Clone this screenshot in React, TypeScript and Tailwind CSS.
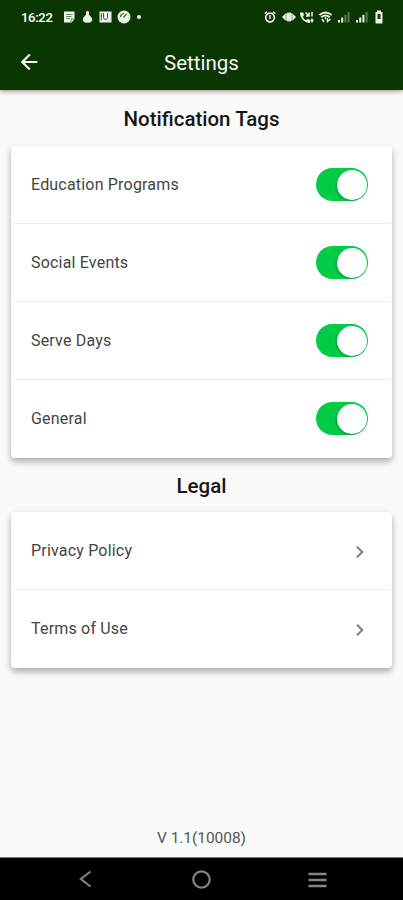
import { useState } from "react";
import type { ReactNode } from "react";

const TAGS = ["Education Programs", "Social Events", "Serve Days", "General"];
const LEGAL = ["Privacy Policy", "Terms of Use"];

function StatusBar() {
  return (
    <div className="flex h-[34px] items-center justify-between pl-[21px] pr-[19px] text-[#edf5ea]">
      <div className="flex items-center">
        <span className="w-[42px] text-[13px] font-semibold leading-none tracking-[-0.35px]">16:22</span>
        <svg className="h-[12px] w-[12px]" viewBox="0 0 12 12" fill="none">
          <path d="M1 0.500h10.500v7.500l-3 3.500H1z" fill="currentColor" />
          <path d="M3 3.500h6.500M3 5.500h5.500M3 7.500h4M8 11V8h3" stroke="#477039" strokeWidth="0.8" />
        </svg>
        <svg className="ml-[7px] h-[12px] w-[11px]" viewBox="0 0 11 12" fill="currentColor">
          <path d="M4 0.500Q5.500-0.300 7 0.500v3.300l2.500 2.700Q11 8.500 9.500 10.500 8.500 11.800 5.500 11.800T1.500 10.500Q0 8.500 1.500 6.500L4 3.800z" />
        </svg>
        <svg className="ml-[6px] h-[12px] w-[13px]" viewBox="0 0 13 12" fill="none">
          <path d="M0.500 0.500h12v11H0.500z" fill="currentColor" />
          <path d="M4.500 2v4.500q0 2 2 2t2-2V2M2.300 2v7.500" stroke="#38642b" strokeWidth="1" />
        </svg>
        <svg className="ml-[5px] h-[14px] w-[14px]" viewBox="0 0 14 14" fill="none">
          <circle cx="7" cy="7" r="6.500" fill="currentColor" />
          <path d="M6.500 7.500l3-3.500M3.500 7A3.500 3.500 0 0 1 7 3.500" stroke="#38642b" strokeWidth="1.200" />
        </svg>
        <span className="ml-[6px] mt-[-1px] h-[4px] w-[4px] rounded-full bg-[#edf5ea]" />
      </div>
      <div className="flex items-center">
        <svg className="h-[12px] w-[12px]" viewBox="0 0 12 12" fill="none" stroke="currentColor">
          <circle cx="6" cy="6.500" r="4.300" strokeWidth="1.700" />
          <path d="M6 4v4M0.700 2.500L3 0.800M11.300 2.500L9 0.800" strokeWidth="1.500" />
        </svg>
        <svg className="ml-[6px] h-[12px] w-[14px]" viewBox="0 0 14 12" fill="currentColor">
          <path d="M0 6l3-3v6zM14 6l-3-3v6z" />
          <rect x="3" y="2.500" width="8" height="7" opacity="0.75" />
          <rect x="4.800" y="1.500" width="4.400" height="9" rx="1" opacity="0.85" />
        </svg>
        <svg className="ml-[3px] h-[13px] w-[15px]" viewBox="0 0 15 13" fill="none" stroke="currentColor">
          <path d="M1 1.500c0 5.500 4 10 10 10.500V8.700L8.500 8 7 9.300Q4.500 8 3.700 5.500L5 4.200 4.300 1.500z" fill="currentColor" stroke="none" />
          <path d="M6.500 1.500l3.500 3.300M10 1.500v3.500H7M13 1v4.500M13 7.500v4M11.500 9.500h3" strokeWidth="1.500" />
        </svg>
        <svg className="ml-[5px] h-[12px] w-[13px]" viewBox="0 0 13 12" fill="none" stroke="currentColor">
          <path d="M0.500 4Q6.500-0.800 12.500 4M2.300 6.300q4.200-3.500 8.400 0" strokeWidth="1.900" />
          <path d="M6.500 6v2.500M3 8l2 3M8.500 7v3.500l3-2.500" strokeWidth="1.400" />
        </svg>
        <Signal level={2} />
        <Signal level={3} />
        <svg className="ml-[6px] h-[14px] w-[10px]" viewBox="0 0 10 14" fill="none">
          <path d="M3 0.500h4V2h1.500v11.500h-7V2H3z" fill="currentColor" />
          <path d="M3.500 4h3v5h-3z" fill="#174010" />
        </svg>
      </div>
    </div>
  );
}

function Signal({ level }: { level: number }) {
  return (
    <svg className="ml-[6px] h-[12px] w-[12px]" viewBox="0 0 12 12" fill="currentColor">
      <rect x="0" y="9" width="2" height="2.500" />
      <rect x="3.200" y="6.500" width="2" height="5" />
      <rect x="6.400" y="3.800" width="2" height="7.700" opacity={level > 2 ? 1 : 0.35} />
      <rect x="9.600" y="1" width="2" height="10.500" opacity="0.35" />
    </svg>
  );
}

function Toggle() {
  const [on, setOn] = useState(true);
  return (
    <button
      role="switch"
      aria-checked={on}
      onClick={() => setOn(!on)}
      className={`flex h-[33px] w-[52.500px] items-center rounded-full px-[1px] ${on ? "justify-end bg-[#03cb46]" : "justify-start bg-gray-300"}`}
    >
      <span className="h-[30px] w-[30px] rounded-full bg-white shadow-[-1px_1px_2px_rgba(0,0,0,0.22)]" />
    </button>
  );
}

function Card({ children }: { children: ReactNode }) {
  return (
    <div className="mx-[11px] rounded-[4px] bg-white shadow-[0_4px_6px_rgba(0,0,0,0.26),0_2px_8px_rgba(0,0,0,0.07)]">
      {children}
    </div>
  );
}

function Row({ label, children }: { label: string; children: ReactNode }) {
  return (
    <div className="flex h-[78px] items-center justify-between rounded-[4px] border-b border-[#ededed] pl-5 pr-6 last:border-transparent">
      <span className="pt-px text-[16px] tracking-[0.19px] text-[#444]">{label}</span>
      {children}
    </div>
  );
}

function App() {
  return (
    <div className="flex h-[900px] w-full flex-col overflow-hidden bg-[#fafafa] font-['Roboto',sans-serif]">
      <header className="z-10 h-[90px] shrink-0 bg-[#0a3601] shadow-[0_1px_5px_rgba(0,0,0,0.45)]">
        <StatusBar />
        <div className="grid h-[56px] grid-cols-[60px_1fr_60px] items-center text-[#f3f8f1]">
          <svg className="ml-5 h-[18px] w-[18px]" viewBox="0 0 18 18" fill="none" stroke="currentColor" strokeWidth="2.200">
            <path d="M17.300 9H2.500M9.800 1.500L2.300 9l7.500 7.500" />
          </svg>
          <h1 className="pt-0.5 text-center text-[20.500px]">Settings</h1>
        </div>
      </header>

      <main className="flex flex-1 flex-col">
        <h2 className="flex h-[56px] items-center justify-center pt-0.5 text-[20.500px] font-medium text-[#161616]">
          Notification Tags
        </h2>
        <Card>
          {TAGS.map((tag) => (
            <Row key={tag} label={tag}>
              <Toggle />
            </Row>
          ))}
        </Card>

        <h2 className="flex h-[54px] items-center justify-center pt-0.5 text-[20.500px] font-medium text-[#161616]">
          Legal
        </h2>
        <Card>
          {LEGAL.map((item) => (
            <Row key={item} label={item}>
              <svg className="mr-1 mt-0.5 h-[14px] w-[9px]" viewBox="0 0 9 14" fill="none" stroke="#808080" strokeWidth="2">
                <path d="M2 1.700L7.300 7 2 12.300" />
              </svg>
            </Row>
          ))}
        </Card>

        <p className="mb-[8px] mt-auto text-center text-[15.500px] leading-[22px] tracking-[-0.05px] text-[#555]">V 1.1(10008)</p>
      </main>

      <nav className="flex h-[43px] shrink-0 items-center justify-between border-t border-[#777] bg-black pl-[79px] pr-[76px] text-[#858585]">
        <svg className="h-[18px] w-[13px]" viewBox="0 0 13 18" fill="none" stroke="currentColor" strokeWidth="2">
          <path d="M11.500 1.500L1.800 9l9.700 7.500" />
        </svg>
        <svg className="ml-[3px] h-[19px] w-[19px]" viewBox="0 0 19 19" fill="none" stroke="currentColor" strokeWidth="2.200">
          <circle cx="9.500" cy="9.500" r="8.200" />
        </svg>
        <svg className="mt-px h-[16px] w-[19px]" viewBox="0 0 19 16" fill="none" stroke="currentColor" strokeWidth="2.400">
          <path d="M0.500 2h18M0.500 8h18M0.500 14h18" />
        </svg>
      </nav>
    </div>
  );
}

export default App;
